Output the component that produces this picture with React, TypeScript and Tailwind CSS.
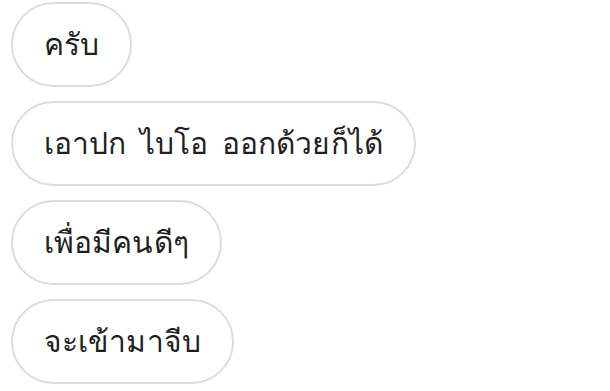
import React from 'react';

const messages = ['ครับ', 'เอาปก ไบโอ ออกด้วยก็ได้', 'เพื่อมีคนดีๆ', 'จะเข้ามาจีบ'];

const App: React.FC = () => {
  return (
    <div className="min-h-[391px] w-[610px] bg-white pt-[2px] pl-[11px] font-['Roboto',sans-serif]">
      <div className="flex flex-col items-start gap-[14px]">
        {messages.map((m) => (
          <div
            key={m}
            className="flex h-[85px] items-center rounded-full border-2 border-[#dcdcdc] px-[31px] text-[30px] tracking-[0.1px] [word-spacing:6px] text-[#1f1f1f]"
          >
            {m}
          </div>
        ))}
      </div>
    </div>
  );
};

export default App;
